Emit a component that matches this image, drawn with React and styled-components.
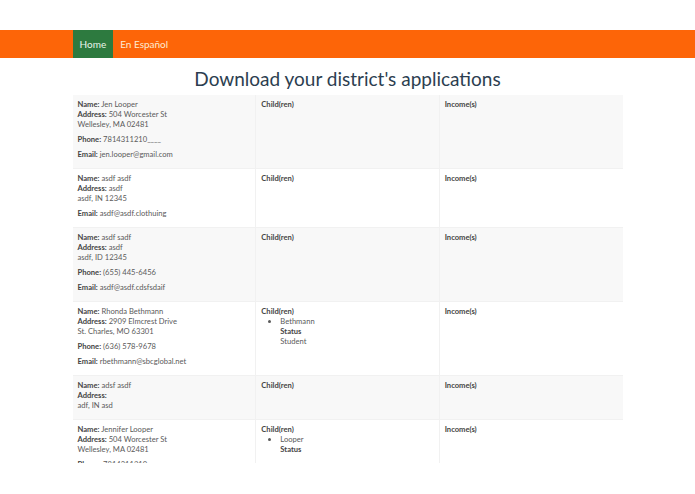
import styled, { createGlobalStyle } from "styled-components"

const GlobalStyle = createGlobalStyle`
  body {
    margin: 0;
    background: #fff;
    font-family: Lato, "Open Sans", sans-serif;
    color: #5a5a5a;
  }
`

const rows = [
  {
    name: "Jen Looper",
    street: "504 Worcester St",
    city: "Wellesley, MA 02481",
    phone: "7814311210____",
    email: "jen.looper@gmail.com",
    children: [],
  },
  {
    name: "asdf asdf",
    street: "asdf",
    city: "asdf, IN 12345",
    email: "asdf@asdf.clothuing",
    children: [],
  },
  {
    name: "asdf sadf",
    street: "asdf",
    city: "asdf, ID 12345",
    phone: "(655) 445-6456",
    email: "asdf@asdf.cdsfsdaif",
    children: [],
  },
  {
    name: "Rhonda Bethmann",
    street: "2909 Elmcrest Drive",
    city: "St. Charles, MO 63301",
    phone: "(636) 578-9678",
    email: "rbethmann@sbcglobal.net",
    children: [{ name: "Bethmann", status: "Student" }],
  },
  {
    name: "adsf asdf",
    street: "",
    city: "adf, IN asd",
    children: [],
  },
  {
    name: "Jennifer Looper",
    street: "504 Worcester St",
    city: "Wellesley, MA 02481",
    phone: "7814311210",
    email: "jen.looper@gmail.com",
    children: [{ name: "Looper", status: "" }],
  },
]

export default function App() {
  return (
    <Page>
      <GlobalStyle />
      <Navbar>
        <NavInner>
          <NavLink $active>Home</NavLink>
          <NavLink>En Español</NavLink>
        </NavInner>
      </Navbar>
      <Container>
        <Title>Download your district's applications</Title>
        <Table>
          <tbody>
            {rows.map((r, i) => (
              <Row key={i}>
                <Cell>
                  <Block>
                    <b>Name:</b> {r.name}
                    <br />
                    <b>Address:</b> {r.street}
                    <br />
                    {r.city}
                  </Block>
                  {r.phone && (
                    <Block>
                      <b>Phone:</b> {r.phone}
                    </Block>
                  )}
                  {r.email && (
                    <Block>
                      <b>Email:</b> {r.email}
                    </Block>
                  )}
                </Cell>
                <Cell>
                  <b>Child(ren)</b>
                  {r.children.length > 0 && (
                    <ChildList>
                      {r.children.map((c, j) => (
                        <li key={j}>
                          {c.name}
                          <StatusLabel>Status</StatusLabel>
                          {c.status && <div>{c.status}</div>}
                        </li>
                      ))}
                    </ChildList>
                  )}
                </Cell>
                <Cell>
                  <b>Income(s)</b>
                </Cell>
              </Row>
            ))}
          </tbody>
        </Table>
      </Container>
    </Page>
  )
}

const Page = styled.div`
  height: 463px;
  overflow: hidden;
  padding-top: 30px;
  box-sizing: border-box;
`

const Navbar = styled.nav`
  background: #fd6508;
  height: 28px;
`

const NavInner = styled.div`
  width: 550px;
  margin: 0 auto;
  display: flex;
  height: 100%;
`

const NavLink = styled.a`
  display: flex;
  align-items: center;
  padding: 0 7px;
  font-size: 10px;
  color: ${p => (p.$active ? "#e9f4ea" : "#fdecd2")};
  background: ${p => (p.$active ? "#2d7a3f" : "transparent")};
  cursor: pointer;
`

const Container = styled.div`
  width: 550px;
  margin: 0 auto;
`

const Title = styled.h1`
  margin: 9px 0 4px;
  font-weight: 400;
  font-size: 19px;
  line-height: 24px;
  text-align: center;
  color: #2c3e50;
`

const Table = styled.table`
  width: 100%;
  table-layout: fixed;
  border-collapse: collapse;
  font-size: 7.6px;
  line-height: 10px;
`

const Row = styled.tr`
  &:nth-child(odd) {
    background: #f8f8f8;
  }
  & + & td {
    border-top: 1px solid #f1f1f1;
  }
`

const Cell = styled.td`
  vertical-align: top;
  padding: 4px 5px;
  border-left: 1px solid #f1f1f1;
  &:first-child {
    border-left: none;
  }
  b {
    color: #444;
    font-weight: 700;
  }
`

const Block = styled.p`
  margin: 0 0 5px;
`

const ChildList = styled.ul`
  margin: 0;
  padding-left: 19px;
`

const StatusLabel = styled.div`
  font-weight: 700;
  color: #444;
`
